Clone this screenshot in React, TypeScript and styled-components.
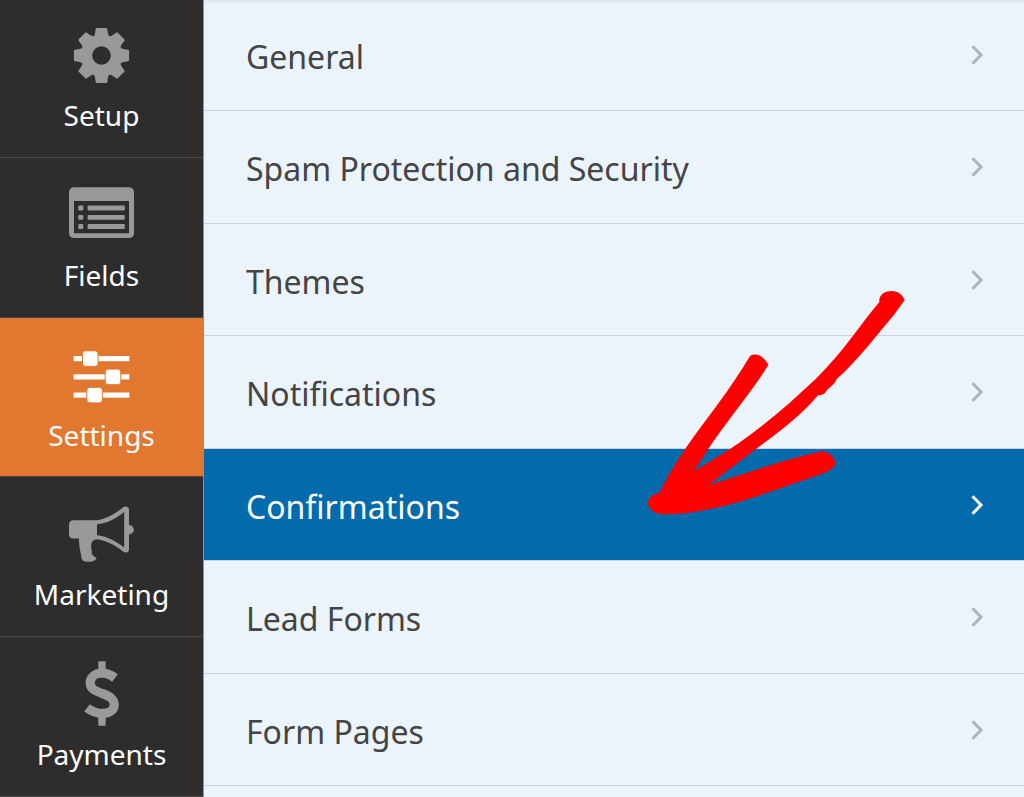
import React from "react";
import styled, { createGlobalStyle } from "styled-components";

const GlobalStyle = createGlobalStyle`
  *, *::before, *::after { box-sizing: border-box; }
  body {
    margin: 0;
    background: #ebf3fb;
    font-family: "Segoe UI", "Noto Sans", "Open Sans", sans-serif;
  }
`;

const Page = styled.div`
  display: flex;
  min-height: 100vh;
  overflow: hidden;
`;

const Sidebar = styled.nav`
  flex: none;
  width: 204px;
  margin-top: -2px;
  background: #2d2d2d;
  border-right: 1px solid #8e9093;
`;

const SidebarButton = styled.button<{ $active?: boolean }>`
  display: flex;
  flex-direction: column;
  align-items: center;
  gap: 8px;
  width: 100%;
  height: ${(p) => (p.$active ? 159 : 160)}px;
  padding: 24px 0 0;
  border: 0;
  border-bottom: 1px solid #484848;
  background: ${(p) => (p.$active ? "#e27730" : "transparent")};
  color: ${(p) => (p.$active ? "#ffffff" : "#999999")};
  font-family: inherit;
  cursor: pointer;
`;

const SidebarIcon = styled.svg`
  display: block;
  flex: none;
  width: 65px;
  height: 66px;
  fill: currentColor;
`;

const SidebarLabel = styled.span`
  color: #ffffff;
  font-size: 28px;
  line-height: 38px;
`;

const Panel = styled.main`
  position: relative;
  flex: 1;
  min-width: 0;
  background: #ebf3fb;
`;

const TopShade = styled.div`
  position: absolute;
  inset: 0 0 auto;
  height: 4px;
  background: linear-gradient(#dde5ee, #ebf3fb);
`;

const SectionList = styled.ul`
  margin: -1px 0 0;
  padding: 0;
  list-style: none;
`;

const SectionItem = styled.li`
  height: 112px;
  &:nth-child(even) { height: 113px; }
`;

const SectionLink = styled.a<{ $active?: boolean }>`
  display: flex;
  align-items: center;
  justify-content: space-between;
  height: 100%;
  padding: 0 40px 0 42px;
  border-bottom: 1px solid #c9d2de;
  background: ${(p) => (p.$active ? "#036aab" : "transparent")};
  color: ${(p) => (p.$active ? "#ffffff" : "#444444")};
  font-size: 32px;
  line-height: 44px;
  text-decoration: none;
`;

const SectionName = styled.span`
  padding-top: 4px;
`;

const Chevron = styled.svg<{ $active?: boolean }>`
  flex: none;
  width: 13px;
  height: 20px;
  fill: none;
  stroke: ${(p) => (p.$active ? "#ffffff" : "#acb3ba")};
  stroke-width: 3;
`;

const Arrow = styled.svg`
  position: absolute;
  top: 280px;
  left: 426px;
  width: 290px;
  height: 250px;
  fill: #ff0000;
  pointer-events: none;
`;

const GearIcon = () => (
  <SidebarIcon viewBox="0 0 65 66" aria-hidden="true">
    <g transform="translate(32.5 33.5)">
      <circle r="15" fill="none" stroke="currentColor" strokeWidth="11.4" />
      {[0, 45, 90, 135, 180, 225, 270, 315].map((a) => (
        <path
          key={a}
          transform={`rotate(${a})`}
          d="M-8.5 -17.5 Q-6.8 -20 -6.5 -22 L-5.8 -26.5 Q-5.6 -27.6 -4.6 -27.6 H4.6 Q5.6 -27.6 5.8 -26.5 L6.5 -22 Q6.8 -20 8.5 -17.5Z"
        />
      ))}
    </g>
  </SidebarIcon>
);

const FieldsIcon = () => (
  <SidebarIcon viewBox="0 0 65 66" aria-hidden="true">
    <path
      fillRule="evenodd"
      d="M5.5 5.3H59.5Q65 5.3 65 10.8V50.5Q65 56 59.5 56H5.5Q0 56 0 50.5V10.8Q0 5.3 5.5 5.3ZM5 19V51.3H60V19Z"
    />
    {[23.6, 32.9, 42.1].map((y) => (
      <g key={y}>
        <rect x="9.3" y={y} width="5" height="4.8" rx="1" />
        <rect x="18.6" y={y} width="37.2" height="4.8" rx="1" />
      </g>
    ))}
  </SidebarIcon>
);

const SlidersIcon = () => (
  <SidebarIcon viewBox="0 0 65 66" aria-hidden="true">
    {[
      [14, 14],
      [32.3, 36.7],
      [50.5, 18.3],
    ].map(([y, x]) => (
      <g key={y}>
        <rect x="4.6" y={y} width="55.8" height="5.2" />
        <rect x={x - 0.5} y={y - 5.2} width="15.6" height="15.6" rx="3" stroke="#e27730" />
      </g>
    ))}
  </SidebarIcon>
);

const MegaphoneIcon = () => (
  <SidebarIcon viewBox="0 0 65 66" aria-hidden="true">
    <path
      fillRule="evenodd"
      d="M4.5 19.3H27.5C37 18 46 13 53.8 6.6C56.5 4.4 60 5.4 60 9V24Q64.8 24.8 64.8 28.7T60 33.4V48.5C60 51.8 56.5 52.3 54 50.4C46.5 44.5 38 39.5 28.5 38.2C24 38.5 22 41 22.2 44.5C22.4 46.5 21.8 47.5 22.6 49C23.4 50.5 22.2 51.5 23 53C24 55 26 55.5 27.7 57.3C25.5 60.5 22.5 60.8 18.5 60.8C15 60.8 12.8 59.5 12.4 56.5C11.5 50 9.6 44.5 10 37.4H4.5Q0 37.4 0 32.9V23.8Q0 19.3 4.5 19.3ZM28 23.3V34.3C38.5 35.3 47 40.5 55.2 46.6V11C47 17.5 38.5 22.2 28 23.3Z"
    />
  </SidebarIcon>
);

const DollarIcon = () => (
  <SidebarIcon viewBox="0 0 65 66" aria-hidden="true">
    <rect x="29.3" y="0.3" width="7.4" height="10" rx="0.6" />
    <rect x="29.3" y="55" width="7.4" height="9.8" rx="0.6" />
    <path
      fill="none"
      stroke="currentColor"
      strokeWidth="9.2"
      d="M46 17C41.5 13.5 37.5 12.2 33 12.2C26 12.2 21.2 16.2 21.2 22C21.2 28.2 27 30.2 33 32.4C40 35 45.2 37.6 45.2 43.8C45.2 49.4 40 52.4 33.5 52.4C27.5 52.4 22.5 50.2 18 46.8"
    />
  </SidebarIcon>
);

const sidebarItems = [
  { label: "Setup", Icon: GearIcon },
  { label: "Fields", Icon: FieldsIcon },
  { label: "Settings", Icon: SlidersIcon, active: true },
  { label: "Marketing", Icon: MegaphoneIcon },
  { label: "Payments", Icon: DollarIcon },
];

const sections = [
  "General",
  "Spam Protection and Security",
  "Themes",
  "Notifications",
  "Confirmations",
  "Lead Forms",
  "Form Pages",
];

export default function App() {
  const current = "Confirmations";
  return (
    <>
      <GlobalStyle />
      <Page>
        <Sidebar aria-label="Form builder">
          {sidebarItems.map(({ label, Icon, active }) => (
            <SidebarButton key={label} type="button" $active={active}>
              <Icon />
              <SidebarLabel>{label}</SidebarLabel>
            </SidebarButton>
          ))}
        </Sidebar>
        <Panel>
          <TopShade />
          <SectionList>
            {sections.map((name) => (
              <SectionItem key={name}>
                <SectionLink href="#" $active={name === current}>
                  <SectionName>{name}</SectionName>
                  <Chevron $active={name === current} viewBox="0 0 13 20" aria-hidden="true">
                    <path d="M1.5 1.2L10 10L1.5 18.8" />
                  </Chevron>
                </SectionLink>
              </SectionItem>
            ))}
          </SectionList>
          <Arrow viewBox="0 0 870 750" aria-hidden="true">
            <path d="M748 66C746 50 758 33 785 33C805 33 818 46 824 60L790 107C740 165 680 245 620 297C615 312 602 320 591 330C586 342 575 347 564 346C520 400 450 455 390 498L236 615C350 580 450 542 575 514C600 514 618 540 616 553C610 568 590 575 575 582C450 625 330 670 240 687C180 700 130 704 95 703C70 700 53 685 54 668C56 650 70 642 88 640C110 590 140 545 170 500C230 415 300 330 360 228C375 220 385 224 393 229C403 236 409 245 415 254C400 280 385 300 370 322C320 390 270 455 236 505L192 573C230 550 265 530 300 507C400 440 480 370 560 294C640 215 690 135 748 66Z" />
          </Arrow>
        </Panel>
      </Page>
    </>
  );
}
